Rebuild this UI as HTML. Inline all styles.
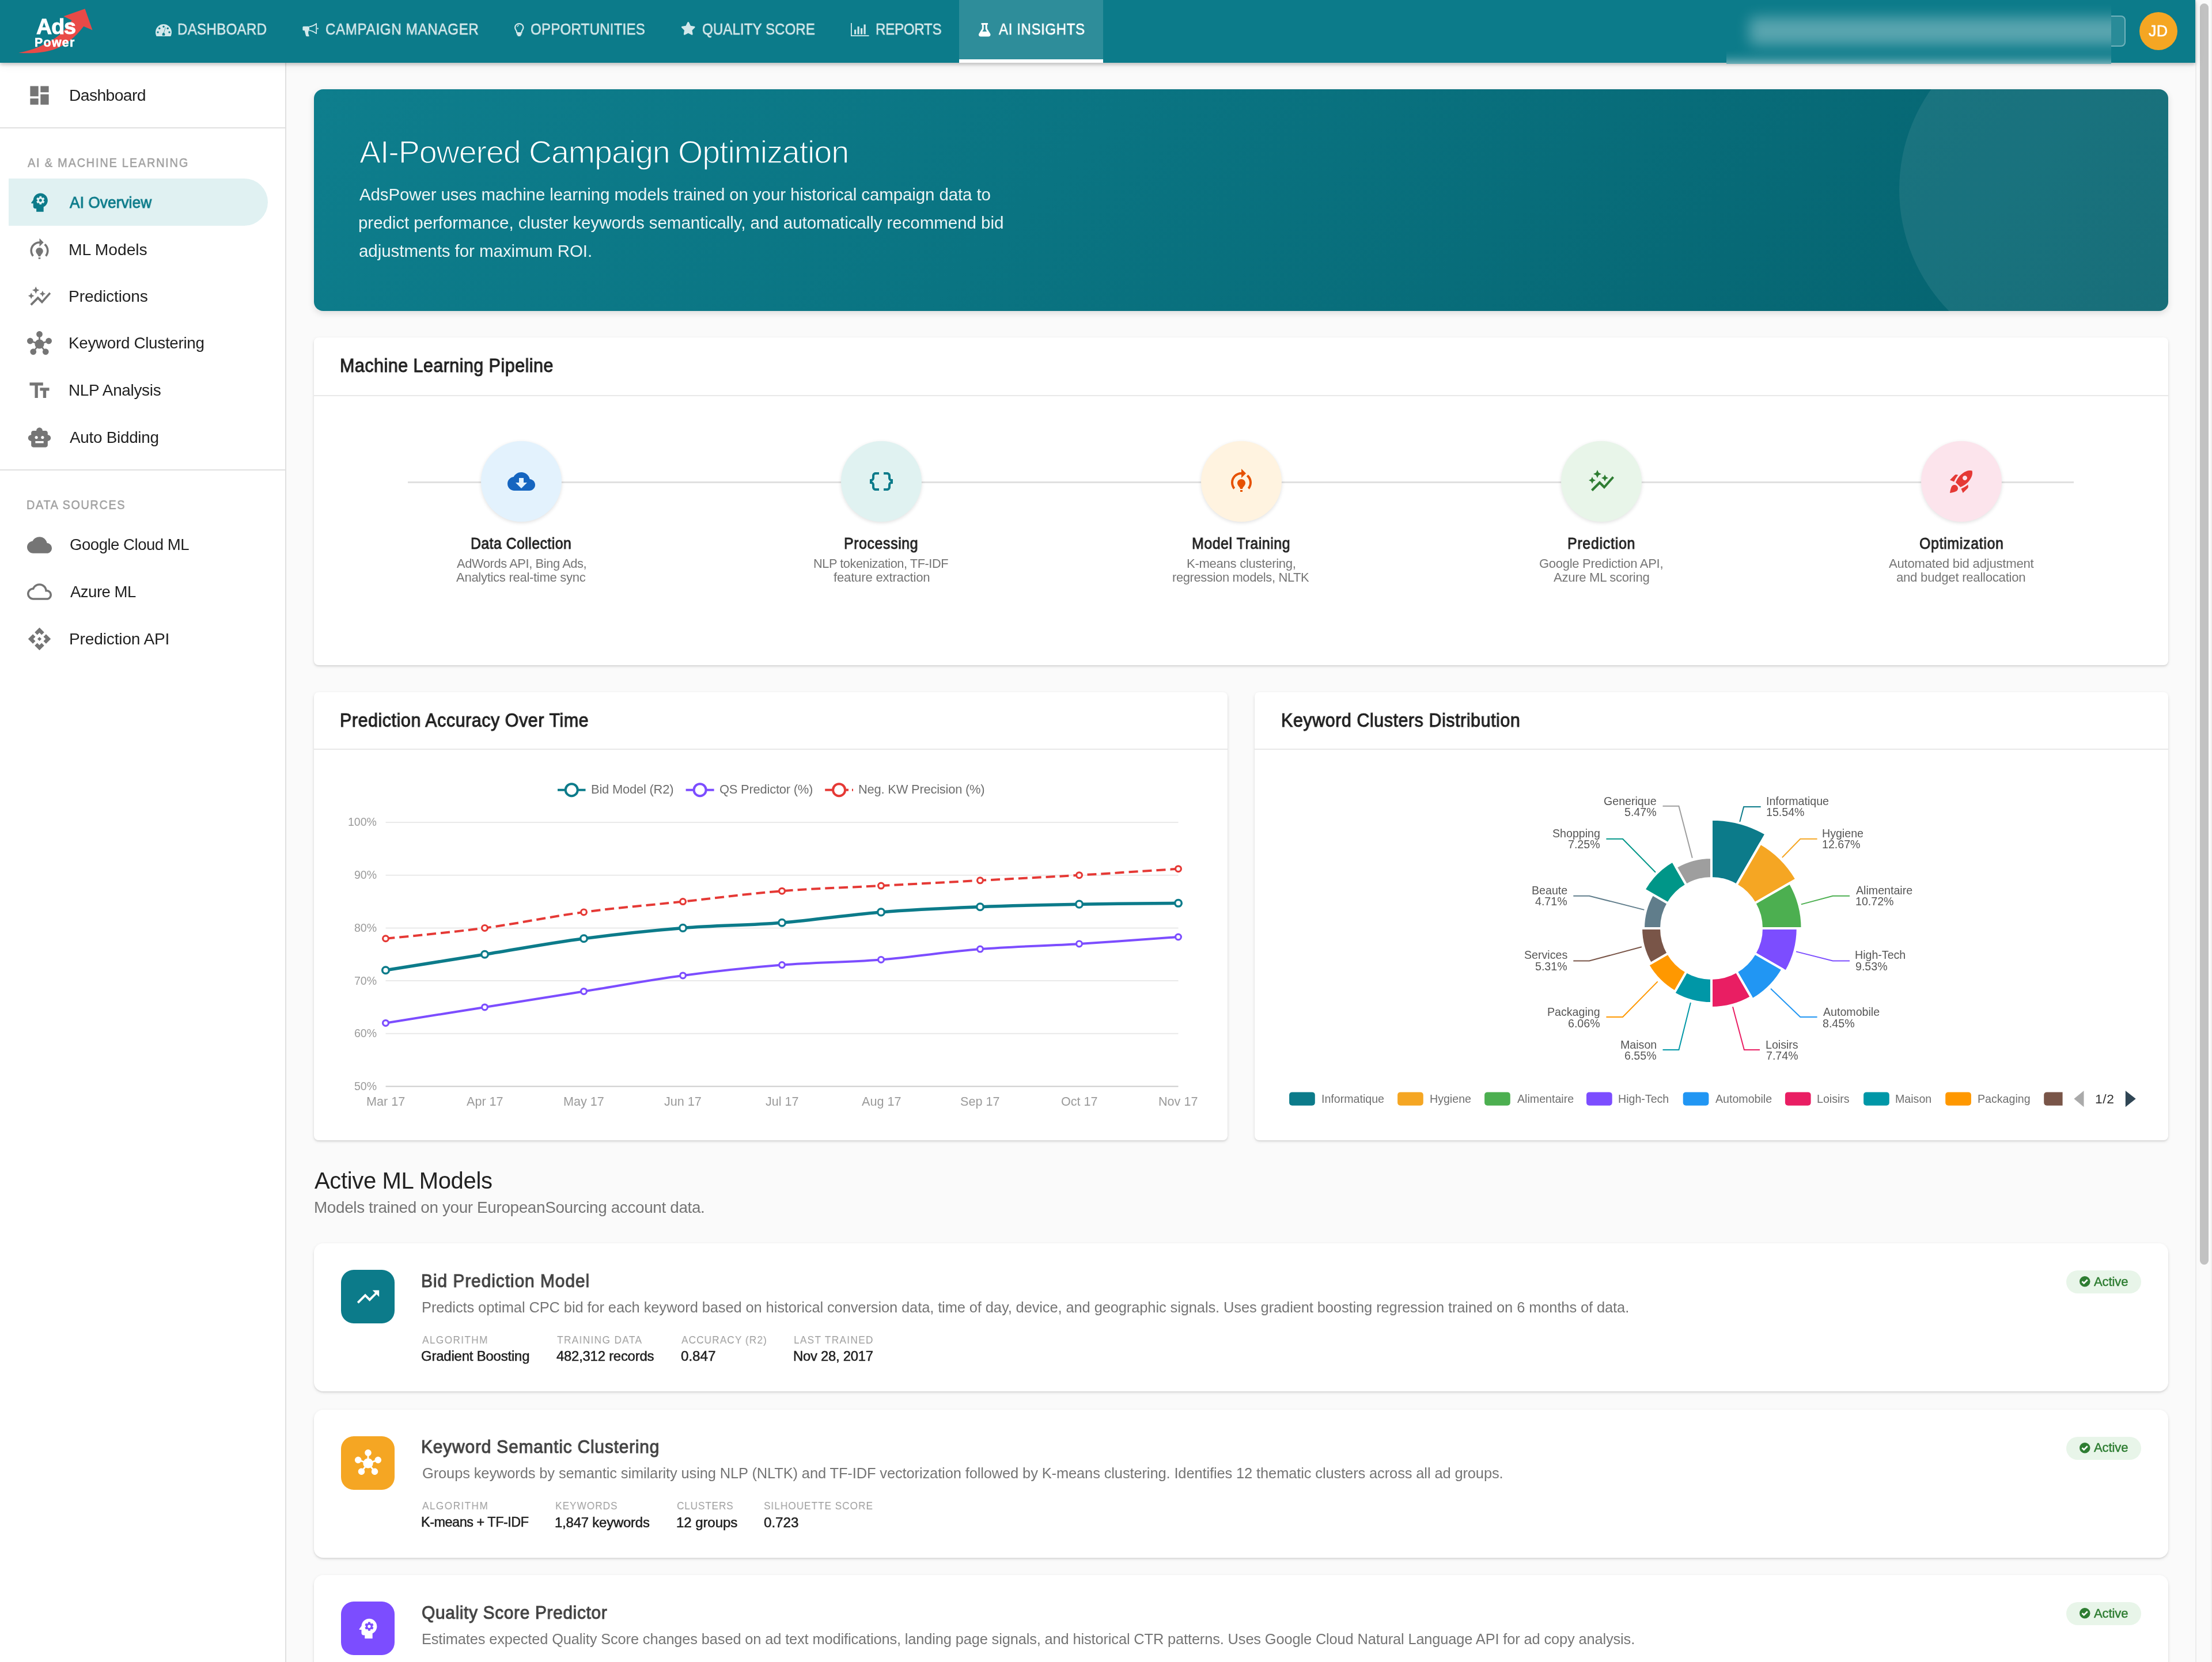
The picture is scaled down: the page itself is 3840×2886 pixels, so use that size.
<!DOCTYPE html><html><head><meta charset="utf-8"><title>AdsPower AI Insights</title><style>
html,body{margin:0;padding:0;width:3840px;height:2886px;overflow:hidden;background:#fafafa;}
body{position:relative;font-family:"Liberation Sans",sans-serif;}
.a{position:absolute;}
.t{position:absolute;white-space:nowrap;line-height:1;will-change:transform;}
svg.a{overflow:visible;}
</style></head><body>
<div class="a" style="left:497px;top:108px;width:3314px;height:2778px;background:#fafafa;"></div>
<div class="a" style="left:0px;top:108px;width:495px;height:2778px;background:#fff;"></div>
<div class="a" style="left:495px;top:108px;width:2px;height:2778px;background:#e0e0e0;"></div>
<div class="a" style="left:0px;top:0px;width:3811px;height:109px;background:#0c7b8a;box-shadow:0 3px 6px rgba(0,0,0,.2),0 2px 16px rgba(0,0,0,.1);z-index:5;"></div>
<div class="a" style="left:0;top:0;width:3811px;height:109px;z-index:6;">
<svg class="a" style="left:0;top:0;width:200px;height:108px" viewBox="0 0 200 108">
<path fill="#e94a47" d="M147.5 15.3 L110.5 28.2 L124.6 35.3 C118 46 108 58 96 66 C80 77 58 87 32.3 91.7 C55 93.5 75 91.5 92 86.5 C112 80 130 66 145.2 45.8 L160.5 52.3 Z"/>
</svg>
<div class="t" style="left:62.50px;top:28.10px;font-size:37.68px;color:#fff;letter-spacing:-1.050px;font-weight:700;-webkit-text-stroke:1px #fff;">Ads</div>
<div class="t" style="left:60.33px;top:63.70px;font-size:21.26px;color:#fff;letter-spacing:1.369px;font-weight:700;-webkit-text-stroke:0.6px #fff;">Power</div>
<div class="t" style="left:308.29px;top:37.96px;font-size:26.74px;color:#d3e7ea;letter-spacing:0.361px;-webkit-text-stroke:0.59px #d3e7ea;transform:scaleX(0.9);transform-origin:0 0;">DASHBOARD</div>
<div class="t" style="left:564.76px;top:37.96px;font-size:26.74px;color:#d3e7ea;letter-spacing:0.809px;-webkit-text-stroke:0.59px #d3e7ea;transform:scaleX(0.9);transform-origin:0 0;">CAMPAIGN MANAGER</div>
<div class="t" style="left:920.67px;top:37.96px;font-size:26.74px;color:#d3e7ea;letter-spacing:0.255px;-webkit-text-stroke:0.59px #d3e7ea;transform:scaleX(0.9);transform-origin:0 0;">OPPORTUNITIES</div>
<div class="t" style="left:1219.08px;top:37.96px;font-size:26.74px;color:#d3e7ea;letter-spacing:0.100px;-webkit-text-stroke:0.59px #d3e7ea;transform:scaleX(0.9);transform-origin:0 0;">QUALITY SCORE</div>
<div class="t" style="left:1519.69px;top:37.96px;font-size:26.74px;color:#d3e7ea;letter-spacing:-0.250px;-webkit-text-stroke:0.59px #d3e7ea;transform:scaleX(0.9);transform-origin:0 0;">REPORTS</div>
<div class="a" style="left:1665px;top:0px;width:250px;height:109px;background:rgba(255,255,255,0.14);"></div>
<div class="a" style="left:1665px;top:103px;width:250px;height:6px;background:#fff;"></div>
<div class="t" style="left:1734.39px;top:37.96px;font-size:26.74px;color:#fff;letter-spacing:0.658px;-webkit-text-stroke:0.59px #fff;transform:scaleX(0.9);transform-origin:0 0;">AI INSIGHTS</div>
<svg class="a" style="left:269.5px;top:42px;width:28px;height:21px" viewBox="0 0 28 21"><path fill="#d3e8eb" d="M14 0C6.3 0 0 6.3 0 14c0 2.5.6 4.8 1.7 6.9.1.1.2.1.3.1h24c.1 0 .2 0 .3-.1C27.4 18.8 28 16.5 28 14 28 6.3 21.7 0 14 0z"/>
<g fill="#0c7b8a"><circle cx="14" cy="4.2" r="1.7"/><circle cx="6.8" cy="7.2" r="1.7"/><circle cx="4" cy="14" r="1.7"/><circle cx="24" cy="14" r="1.7"/><circle cx="21.2" cy="7.2" r="1.7"/>
<path d="M17.6 5.8l-2.9 9.2c1 .5 1.7 1.6 1.7 2.8 0 .7-.2 1.3-.5 1.9h-3.8c-.3-.6-.5-1.2-.5-1.9 0-1.5 1.1-2.8 2.5-3.1l2.9-9.2z"/></g></svg>
<svg class="a" style="left:515px;top:30px;width:50px;height:40px" viewBox="0 0 50 40"><g fill="#d3e8eb"><rect x="10.4" y="15.8" width="11.6" height="7.2" rx="1.6"/><path d="M13.6 22.5 L16 32 Q16.5 33.2 18.2 33.2 L20.8 33.2 Q22.4 33 21.4 31.6 Q19.9 29.3 20.1 25.8 L21.4 22.5Z"/><circle cx="36.6" cy="19.6" r="1.3"/></g><path d="M21.8 16.4 C26.4 15.9 30.6 14 34.2 11 L34.2 28.2 C30.6 25.6 26.4 23.2 21.8 22.6" fill="none" stroke="#d3e8eb" stroke-width="1.7" stroke-linejoin="round"/></svg>
<svg class="a" style="left:892.5px;top:40px;width:16.5px;height:23px" viewBox="0 0 16.5 23"><path fill="none" stroke="#d3e8eb" stroke-width="2.2" d="M8.25 1.1C4.3 1.1 1.1 4.1 1.1 7.9c0 3 2.2 4.6 2.8 6.8.2.8.3 1.5.3 2.3h8.1c0-.8.1-1.5.3-2.3.6-2.2 2.8-3.8 2.8-6.8 0-3.8-3.2-6.8-7.15-6.8z"/><rect x="4.2" y="17.6" width="8.1" height="3.6" rx="1" fill="#d3e8eb"/><rect x="5.5" y="20.5" width="5.5" height="2.5" rx="1.2" fill="#d3e8eb"/><path d="M5 6.5c.3-1.3 1.3-2.2 2.6-2.5" stroke="#d3e8eb" stroke-width="1.3" fill="none"/></svg>
<svg class="a" style="left:1182px;top:38.4px;width:25.5px;height:24.5px" viewBox="0 0 576 550"><path fill="#d3e8eb" d="M259.3 17.8L194 150.2 47.9 171.5c-26.2 3.8-36.7 36.1-17.7 54.6l105.7 103-25 145.5c-4.5 26.3 23.2 46 46.4 33.7L288 439.6l130.7 68.7c23.2 12.2 50.9-7.4 46.4-33.7l-25-145.5 105.7-103c19-18.5 8.5-50.8-17.7-54.6L382 150.2 316.7 17.8c-11.7-23.6-45.6-23.9-57.4 0z"/></svg>
<svg class="a" style="left:1477px;top:40px;width:31.5px;height:23px" viewBox="0 0 31.5 23"><g fill="#d3e8eb"><rect x="0" y="0" width="1.8" height="23"/><rect x="0" y="21.2" width="31.5" height="1.8"/><rect x="6" y="11.5" width="3.2" height="8"/><rect x="11.5" y="6" width="3.2" height="13.5"/><rect x="17" y="9" width="3.2" height="10.5"/><rect x="22.5" y="2.5" width="3.2" height="17"/></g></svg>
<svg class="a" style="left:1698px;top:39.5px;width:22.5px;height:23.5px" viewBox="0 0 448 512"><path fill="#fff" d="M437.2 403.5L320 215V64h8c13.3 0 24-10.7 24-24V24c0-13.3-10.7-24-24-24H120c-13.3 0-24 10.7-24 24v16c0 13.3 10.7 24 24 24h8v151L10.8 403.5C-18.5 450.6 15.3 512 70.9 512h306.2c55.7 0 89.4-61.5 60.1-108.5zM137.9 320l48.2-77.6c3.7-5.2 5.8-11.6 5.8-18.4V64h64v160c0 6.9 2.2 13.200 5.8 18.4l48.2 77.6h-172z"/></svg>
<div class="a" style="left:3027px;top:27.3px;width:663px;height:53.7px;border:2px solid rgba(255,255,255,0.35);border-radius:8px;background:rgba(255,255,255,0.12);box-sizing:border-box;"></div>
<div class="a" style="left:2997px;top:0;width:668px;height:111px;overflow:hidden;background:#0c7b8a;">
<div class="a" style="left:0;top:0;width:668px;height:111px;filter:blur(12px);">
<div class="a" style="left:40px;top:30px;width:720px;height:48px;border-radius:8px;background:rgba(255,255,255,0.32);"></div>
<div class="a" style="left:-40px;top:113px;width:760px;height:60px;background:#f4f4f4;"></div>
</div></div>
<div class="a" style="left:3713.5px;top:20.8px;width:66.5px;height:66.5px;border-radius:50%;background:#f5a623;"></div>
<div class="t" style="left:3730.43px;top:41.34px;font-size:26.77px;color:#fff;letter-spacing:0.400px;-webkit-text-stroke:0.59px #fff;">JD</div>
</div>
<div class="a" style="left:3811px;top:0px;width:29px;height:2886px;background:#fafafa;"></div>
<div class="a" style="left:3811px;top:0px;width:2px;height:2886px;background:#ececec;"></div>
<div class="a" style="left:3838px;top:0px;width:2px;height:2886px;background:#efefef;"></div>
<div class="a" style="left:3819px;top:6px;width:15px;height:2190px;background:#c2c2c2;border-radius:8px;"></div>
<div class="t" style="left:119.62px;top:151.09px;font-size:28.37px;color:#212121;letter-spacing:-0.653px;">Dashboard</div>
<svg class="a" style="left:46.50px;top:143.90px;width:43.00px;height:43.00px" viewBox="0 0 24 24"><path fill="#757575" d="M3 13h8V3H3v10zm0 8h8v-6H3v6zm10 0h8V11h-8v10zm0-18v6h8V3h-8z"/></svg>
<div class="a" style="left:0px;top:221px;width:495px;height:2px;background:#e0e0e0;"></div>
<div class="t" style="left:47.50px;top:271.50px;font-size:22.09px;color:#9e9e9e;letter-spacing:2.024px;-webkit-text-stroke:0.49px #9e9e9e;transform:scaleX(0.9);transform-origin:0 0;">AI &amp; MACHINE LEARNING</div>
<div class="a" style="left:15.4px;top:310px;width:449.6px;height:82px;background:#e0f1f2;border-radius:0 41px 41px 0;"></div>
<svg class="a" style="left:46.50px;top:329.50px;width:43.00px;height:43.00px" viewBox="0 0 24 24"><path fill="#0c7b8a" d="M13 8.57c-.79 0-1.43.64-1.43 1.43s.64 1.43 1.43 1.43 1.43-.64 1.43-1.43-.64-1.43-1.43-1.43zM13 3C9.25 3 6.2 5.94 6.02 9.64L4.1 12.2c-.25.33-.01.8.4.8H6v3c0 1.1.9 2 2 2h1v3h7v-4.68c2.36-1.12 4-3.53 4-6.32 0-3.87-3.13-7-7-7zm3 7c0 .13-.01.26-.02.39l.83.66c.08.06.1.16.05.25l-.8 1.39c-.05.09-.16.12-.24.09l-.99-.4c-.21.16-.43.29-.67.39L14 13.83c-.01.1-.1.17-.2.17h-1.6c-.1 0-.18-.07-.2-.17l-.15-1.06c-.25-.1-.47-.23-.68-.39l-.99.4c-.09.03-.2 0-.25-.09l-.8-1.39c-.05-.08-.03-.19.05-.25l.84-.66c-.01-.13-.02-.26-.02-.39s.02-.27.04-.39l-.85-.66c-.08-.06-.1-.16-.05-.26l.8-1.38c.05-.09.15-.12.24-.09l1 .4c.2-.15.43-.29.67-.39L12 6.17c.02-.1.1-.17.2-.17h1.6c.1 0 .18.07.19.17l.15 1.06c.24.1.46.23.67.39l1-.4c.09-.03.2 0 .24.09l.8 1.38c.05.09.03.2-.05.26l-.85.66c.03.12.04.25.04.39z"/></svg>
<div class="t" style="left:121.48px;top:336.73px;font-size:28.20px;color:#0c7b8a;letter-spacing:0.087px;-webkit-text-stroke:0.90px #0c7b8a;transform:scaleX(0.93);transform-origin:0 0;">AI Overview</div>
<div class="t" style="left:119.35px;top:419.05px;font-size:28.30px;color:#212121;letter-spacing:-0.084px;">ML Models</div>
<svg class="a" style="left:46.50px;top:412.00px;width:43.00px;height:43.00px" viewBox="0 0 24 24"><path fill="#757575" d="M15.5 13.5c0 2-2.5 3.5-2.5 5h-2c0-1.5-2.5-3-2.5-5 0-1.93 1.57-3.5 3.5-3.5s3.5 1.57 3.5 3.5zm-2.5 6h-2V21h2v-1.5zm6-6.5c0 1.68-.59 3.21-1.58 4.42l1.42 1.42C20.18 17.27 21 15.23 21 13c0-2.74-1.23-5.19-3.16-6.84l-1.42 1.42C17.99 8.86 19 10.82 19 13zm-3-8l-4-4v3c-4.97 0-9 4.03-9 9 0 2.23.82 4.27 2.16 5.84l1.42-1.42C5.59 16.21 5 14.68 5 13c0-3.86 3.14-7 7-7v3l4-4z"/></svg>
<div class="t" style="left:119.35px;top:500.66px;font-size:28.16px;color:#212121;letter-spacing:-0.138px;">Predictions</div>
<svg class="a" style="left:46.50px;top:493.50px;width:43.00px;height:43.00px" viewBox="0 0 24 24"><path fill="#757575" d="M14.06 9.94L12 9l2.06-.94L15 6l.94 2.06L18 9l-2.06.94L15 12l-.94-2.06zM4 14l.94-2.06L7 11l-2.06-.94L4 8l-.94 2.06L1 11l2.06.94L4 14zm4.5-5l1.09-2.41L12 5.5 9.59 4.41 8.5 2 7.41 4.41 5 5.5l2.41 1.09L8.5 9zm-4 11.5l6-6.01 4 4L23 8.93l-1.41-1.41-7.09 7.97-4-4L3 19l1.5 1.5z"/></svg>
<div class="t" style="left:119.35px;top:582.46px;font-size:27.81px;color:#212121;letter-spacing:-0.300px;">Keyword Clustering</div>
<svg class="a" style="left:46.50px;top:575.00px;width:43.00px;height:43.00px" viewBox="0 0 24 24"><path fill="#757575" d="M8.4 18.2C8.78 18.7 9 19.32 9 20c0 1.66-1.34 3-3 3s-3-1.34-3-3 1.34-3 3-3c.44 0 .85.09 1.23.26l1.41-1.77c-.92-1.03-1.29-2.39-1.09-3.69l-2.03-.68C4.98 11.95 4.06 12.5 3 12.5c-1.66 0-3-1.34-3-3s1.34-3 3-3 3 1.34 3 3c0 .07 0 .14-.01.21l2.03.68c.64-1.21 1.82-2.09 3.22-2.32V5.91C9.96 5.57 9 4.4 9 3c0-1.66 1.34-3 3-3s3 1.34 3 3c0 1.4-.96 2.57-2.25 2.91v2.16c1.4.23 2.58 1.11 3.22 2.32l2.03-.68C18 9.64 18 9.57 18 9.5c0-1.66 1.34-3 3-3s3 1.34 3 3-1.34 3-3 3c-1.06 0-1.98-.55-2.52-1.37l-2.03.68c.2 1.29-.16 2.65-1.09 3.69l1.41 1.77c.38-.17.79-.26 1.23-.26 1.66 0 3 1.34 3 3s-1.34 3-3 3-3-1.34-3-3c0-.68.22-1.3.6-1.8l-1.41-1.77c-1.35.75-3.01.76-4.37 0L8.4 18.2z"/></svg>
<div class="t" style="left:119.35px;top:664.34px;font-size:27.94px;color:#212121;letter-spacing:-0.314px;">NLP Analysis</div>
<svg class="a" style="left:46.50px;top:657.00px;width:43.00px;height:43.00px" viewBox="0 0 24 24"><path fill="#757575" d="M2.5 4v3h5v12h3V7h5V4h-13zm19 5h-9v3h3v7h3v-7h3V9z"/></svg>
<div class="t" style="left:121.47px;top:746.08px;font-size:27.90px;color:#212121;letter-spacing:-0.286px;">Auto Bidding</div>
<svg class="a" style="left:46.50px;top:738.70px;width:43.00px;height:43.00px" viewBox="0 0 24 24"><path fill="#757575" d="M20 9V7c0-1.1-.9-2-2-2h-3c0-1.66-1.34-3-3-3S9 3.34 9 5H6c-1.1 0-2 .9-2 2v2c-1.66 0-3 1.34-3 3s1.34 3 3 3v4c0 1.1.9 2 2 2h12c1.1 0 2-.9 2-2v-4c1.66 0 3-1.34 3-3s-1.34-3-3-3zM7.5 11.5c0-.83.67-1.5 1.5-1.5s1.5.67 1.5 1.5S9.83 13 9 13s-1.5-.67-1.5-1.5zM16 17H8v-2h8v2zm-1-4c-.83 0-1.5-.67-1.5-1.5S14.17 10 15 10s1.5.67 1.5 1.5S15.83 13 15 13z"/></svg>
<div class="a" style="left:0px;top:815px;width:495px;height:2px;background:#e0e0e0;"></div>
<div class="t" style="left:45.92px;top:866.10px;font-size:22.09px;color:#9e9e9e;letter-spacing:1.806px;-webkit-text-stroke:0.49px #9e9e9e;transform:scaleX(0.9);transform-origin:0 0;">DATA SOURCES</div>
<div class="t" style="left:120.62px;top:932.15px;font-size:27.59px;color:#212121;letter-spacing:-0.496px;">Google Cloud ML</div>
<svg class="a" style="left:46.50px;top:924.50px;width:43.00px;height:43.00px" viewBox="0 0 24 24"><path fill="#757575" d="M19.35 10.04C18.67 6.59 15.64 4 12 4 9.11 4 6.6 5.64 5.35 8.04 2.34 8.36 0 10.91 0 14c0 3.31 2.69 6 6 6h13c2.76 0 5-2.24 5-5 0-2.64-2.05-4.78-4.65-4.96z"/></svg>
<div class="t" style="left:121.88px;top:1013.98px;font-size:27.54px;color:#212121;letter-spacing:-0.518px;">Azure ML</div>
<svg class="a" style="left:46.50px;top:1006.30px;width:43.00px;height:43.00px" viewBox="0 0 24 24"><path fill="#757575" d="M19.35 10.04C18.67 6.59 15.64 4 12 4 9.11 4 6.6 5.64 5.35 8.04 2.34 8.36 0 10.91 0 14c0 3.31 2.69 6 6 6h13c2.76 0 5-2.24 5-5 0-2.64-2.05-4.78-4.65-4.96zM19 18H6c-2.21 0-4-1.79-4-4s1.79-4 4-4h.71C7.37 7.69 9.48 6 12 6c3.04 0 5.5 2.46 5.5 5.5v.5H19c1.66 0 3 1.34 3 3s-1.34 3-3 3z"/></svg>
<div class="t" style="left:119.75px;top:1095.59px;font-size:28.13px;color:#212121;letter-spacing:-0.175px;">Prediction API</div>
<svg class="a" style="left:46.50px;top:1088.40px;width:43.00px;height:43.00px" viewBox="0 0 24 24"><path fill="#757575" d="M14 12l-2 2-2-2 2-2 2 2zm-2-6l2.12 2.12 2.5-2.5L12 1 7.38 5.62l2.5 2.5L12 6zm-6 6l2.12-2.12-2.5-2.5L1 12l4.62 4.62 2.5-2.5L6 12zm12 0l-2.12 2.12 2.5 2.5L23 12l-4.62-4.62-2.5 2.5L18 12zm-6 6l-2.12-2.12-2.5 2.5L12 23l4.62-4.62-2.5-2.5L12 18z"/></svg>
<div class="a" style="left:545px;top:155px;width:3219px;height:385px;border-radius:16px;overflow:hidden;background:linear-gradient(135deg,#0e7e8d 0%,#0a7482 40%,#05626e 100%);box-shadow:0 4px 12px rgba(0,0,0,0.12);">
<div class="a" style="left:2752px;top:-127px;width:602px;height:602px;border-radius:50%;background:rgba(255,255,255,0.08);"></div></div>
<div class="t" style="left:623.88px;top:237.13px;font-size:55.61px;color:#fff;letter-spacing:-1.094px;-webkit-text-stroke:1.4px #0c7988;">AI-Powered Campaign Optimization</div>
<div class="t" style="left:623.88px;top:323.05px;font-size:29.48px;color:rgba(255,255,255,0.92);letter-spacing:-0.102px;">AdsPower uses machine learning models trained on your historical campaign data to</div>
<div class="t" style="left:622.12px;top:372.17px;font-size:29.57px;color:rgba(255,255,255,0.92);letter-spacing:-0.076px;">predict performance, cluster keywords semantically, and automatically recommend bid</div>
<div class="t" style="left:622.75px;top:421.00px;font-size:29.53px;color:rgba(255,255,255,0.92);letter-spacing:-0.060px;">adjustments for maximum ROI.</div>
<div class="a" style="left:545px;top:586px;width:3219px;height:569px;background:#fff;border-radius:8px;box-shadow:0 2px 6px rgba(0,0,0,0.09),0 2px 3px rgba(0,0,0,0.09);"></div>
<div class="t" style="left:589.96px;top:619.49px;font-size:32.85px;color:#212121;letter-spacing:0.469px;-webkit-text-stroke:1.00px #212121;transform:scaleX(0.93);transform-origin:0 0;">Machine Learning Pipeline</div>
<div class="a" style="left:545px;top:686px;width:3219px;height:2px;background:#e8e8e8;"></div>
<div class="a" style="left:708px;top:836px;width:2892px;height:3px;background:#e0e0e0;"></div>
<div class="a" style="left:834.5px;top:766px;width:140px;height:140px;border-radius:50%;background:#e3f2fd;box-shadow:0 2px 6px rgba(0,0,0,0.12);"></div>
<svg class="a" style="left:880.50px;top:812.00px;width:48.00px;height:48.00px" viewBox="0 0 24 24"><path fill="#1565c0" d="M19.35 10.04C18.67 6.59 15.64 4 12 4 9.11 4 6.6 5.64 5.35 8.04 2.34 8.36 0 10.91 0 14c0 3.31 2.69 6 6 6h13c2.76 0 5-2.24 5-5 0-2.64-2.05-4.78-4.65-4.96zM17 13l-5 5-5-5h3V9h4v4h3z"/></svg>
<div class="t" style="left:816.92px;top:930.76px;font-size:26.74px;color:#212121;letter-spacing:0.470px;-webkit-text-stroke:0.90px #212121;transform:scaleX(0.93);transform-origin:0 0;">Data Collection</div>
<div class="t" style="left:792.60px;top:968.27px;font-size:21.88px;color:#757575;letter-spacing:-0.408px;">AdWords API, Bing Ads,</div>
<div class="t" style="left:792.10px;top:991.91px;font-size:22.08px;color:#757575;letter-spacing:-0.308px;">Analytics real-time sync</div>
<div class="a" style="left:1459.5px;top:766px;width:140px;height:140px;border-radius:50%;background:#e0f2f1;box-shadow:0 2px 6px rgba(0,0,0,0.12);"></div>
<svg class="a" style="left:1505.55px;top:812.00px;width:48.00px;height:48.00px" viewBox="0 0 24 24"><path fill="#0c7b8a" d="M4 7v2c0 .55-.45 1-1 1H2v4h1c.55 0 1 .45 1 1v2c0 1.65 1.35 3 3 3h3v-2H7c-.55 0-1-.45-1-1v-2c0-1.3-.84-2.42-2-2.83v-.34C5.16 11.42 6 10.3 6 9V7c0-.55.45-1 1-1h3V4H7C5.35 4 4 5.35 4 7zM21 10c-.55 0-1-.45-1-1V7c0-1.65-1.35-3-3-3h-3v2h3c.55 0 1 .45 1 1v2c0 1.3.84 2.42 2 2.83v.34c-1.16.41-2 1.52-2 2.83v2c0 .55-.45 1-1 1h-3v2h3c1.65 0 3-1.35 3-3v-2c0-.55.45-1 1-1h1v-4h-1z"/></svg>
<div class="t" style="left:1465.07px;top:930.76px;font-size:26.74px;color:#212121;letter-spacing:0.657px;-webkit-text-stroke:0.90px #212121;transform:scaleX(0.93);transform-origin:0 0;">Processing</div>
<div class="t" style="left:1411.90px;top:968.38px;font-size:21.76px;color:#757575;letter-spacing:-0.438px;">NLP tokenization, TF-IDF</div>
<div class="t" style="left:1446.50px;top:991.83px;font-size:22.18px;color:#757575;letter-spacing:-0.215px;">feature extraction</div>
<div class="a" style="left:2084.6px;top:766px;width:140px;height:140px;border-radius:50%;background:#fff3e0;box-shadow:0 2px 6px rgba(0,0,0,0.12);"></div>
<svg class="a" style="left:2130.60px;top:812.00px;width:48.00px;height:48.00px" viewBox="0 0 24 24"><path fill="#e65100" d="M15.5 13.5c0 2-2.5 3.5-2.5 5h-2c0-1.5-2.5-3-2.5-5 0-1.93 1.57-3.5 3.5-3.5s3.5 1.57 3.5 3.5zm-2.5 6h-2V21h2v-1.5zm6-6.5c0 1.68-.59 3.21-1.58 4.42l1.42 1.42C20.18 17.27 21 15.23 21 13c0-2.74-1.23-5.19-3.16-6.84l-1.42 1.42C17.99 8.86 19 10.82 19 13zm-3-8l-4-4v3c-4.97 0-9 4.03-9 9 0 2.23.82 4.27 2.16 5.84l1.42-1.42C5.59 16.21 5 14.68 5 13c0-3.86 3.14-7 7-7v3l4-4z"/></svg>
<div class="t" style="left:2069.07px;top:930.76px;font-size:26.74px;color:#212121;letter-spacing:0.619px;-webkit-text-stroke:0.90px #212121;transform:scaleX(0.93);transform-origin:0 0;">Model Training</div>
<div class="t" style="left:2059.70px;top:968.09px;font-size:22.11px;color:#757575;letter-spacing:-0.303px;">K-means clustering,</div>
<div class="t" style="left:2035.40px;top:992.04px;font-size:21.93px;color:#757575;letter-spacing:-0.362px;">regression models, NLTK</div>
<div class="a" style="left:2709.6px;top:766px;width:140px;height:140px;border-radius:50%;background:#e8f5e9;box-shadow:0 2px 6px rgba(0,0,0,0.12);"></div>
<svg class="a" style="left:2755.65px;top:812.00px;width:48.00px;height:48.00px" viewBox="0 0 24 24"><path fill="#2e7d32" d="M14.06 9.94L12 9l2.06-.94L15 6l.94 2.06L18 9l-2.06.94L15 12l-.94-2.06zM4 14l.94-2.06L7 11l-2.06-.94L4 8l-.94 2.06L1 11l2.06.94L4 14zm4.5-5l1.09-2.41L12 5.5 9.59 4.41 8.5 2 7.41 4.41 5 5.5l2.41 1.09L8.5 9zm-4 11.5l6-6.01 4 4L23 8.93l-1.41-1.41-7.09 7.97-4-4L3 19l1.5 1.5z"/></svg>
<div class="t" style="left:2720.72px;top:930.76px;font-size:26.74px;color:#212121;letter-spacing:0.816px;-webkit-text-stroke:0.90px #212121;transform:scaleX(0.93);transform-origin:0 0;">Prediction</div>
<div class="t" style="left:2672.47px;top:968.14px;font-size:22.04px;color:#757575;letter-spacing:-0.293px;">Google Prediction API,</div>
<div class="t" style="left:2696.95px;top:991.87px;font-size:22.12px;color:#757575;letter-spacing:-0.298px;">Azure ML scoring</div>
<div class="a" style="left:3334.7px;top:766px;width:140px;height:140px;border-radius:50%;background:#fce4ec;box-shadow:0 2px 6px rgba(0,0,0,0.12);"></div>
<svg class="a" style="left:3380.70px;top:812.00px;width:48.00px;height:48.00px" viewBox="0 0 24 24"><path fill="#e53935" d="M9.19 6.35c-2.04 2.29-3.44 5.58-3.57 5.89L2 10.69l4.05-4.05c.47-.47 1.15-.68 1.81-.55l1.33.26zM11.17 17s3.74-1.55 5.89-3.7c5.4-5.4 4.5-9.62 4.21-10.57-.95-.3-5.17-1.19-10.57 4.21C8.55 9.09 7 12.83 7 12.83L11.17 17zm6.48-2.19c-2.29 2.04-5.58 3.44-5.89 3.57L13.31 22l4.05-4.05c.47-.47.68-1.15.55-1.81l-.26-1.33zM9 18c0 .83-.34 1.58-.88 2.12C6.94 21.3 2 22 2 22s.7-4.94 1.88-6.12C4.42 15.34 5.17 15 6 15c1.66 0 3 1.34 3 3zm4-9c0-1.1.9-2 2-2s2 .9 2 2-.9 2-2 2-2-.9-2-2z"/></svg>
<div class="t" style="left:3331.94px;top:930.76px;font-size:26.74px;color:#212121;letter-spacing:0.759px;-webkit-text-stroke:0.90px #212121;transform:scaleX(0.93);transform-origin:0 0;">Optimization</div>
<div class="t" style="left:3279.10px;top:968.03px;font-size:22.17px;color:#757575;letter-spacing:-0.247px;">Automated bid adjustment</div>
<div class="t" style="left:3292.32px;top:991.81px;font-size:22.19px;color:#757575;letter-spacing:-0.278px;">and budget reallocation</div>
<div class="a" style="left:545px;top:1202px;width:1586px;height:778px;background:#fff;border-radius:8px;box-shadow:0 2px 6px rgba(0,0,0,0.09),0 2px 3px rgba(0,0,0,0.09);"></div>
<div class="t" style="left:589.86px;top:1234.59px;font-size:32.85px;color:#212121;letter-spacing:0.545px;-webkit-text-stroke:1.00px #212121;transform:scaleX(0.93);transform-origin:0 0;">Prediction Accuracy Over Time</div>
<div class="a" style="left:545px;top:1300px;width:1586px;height:2px;background:#e8e8e8;"></div>
<svg class="a" style="left:0;top:0;width:3840px;height:2886px;pointer-events:none" viewBox="0 0 3840 2886">
<line x1="669.5" y1="1794.8" x2="2045.5" y2="1794.8" stroke="#e9e9e9" stroke-width="2"/>
<line x1="669.5" y1="1703.1" x2="2045.5" y2="1703.1" stroke="#e9e9e9" stroke-width="2"/>
<line x1="669.5" y1="1611.4" x2="2045.5" y2="1611.4" stroke="#e9e9e9" stroke-width="2"/>
<line x1="669.5" y1="1519.7" x2="2045.5" y2="1519.7" stroke="#e9e9e9" stroke-width="2"/>
<line x1="669.5" y1="1428.0" x2="2045.5" y2="1428.0" stroke="#e9e9e9" stroke-width="2"/>
<line x1="669.5" y1="1886.5" x2="2045.5" y2="1886.5" stroke="#cccccc" stroke-width="2"/>
<path d="M669.50 1629.74 C669.50 1629.74 781.51 1619.40 841.50 1611.40 C901.91 1603.35 953.09 1591.94 1013.50 1583.89 C1073.49 1575.89 1125.30 1571.97 1185.50 1565.55 C1245.70 1559.13 1297.17 1552.03 1357.50 1547.21 C1417.57 1542.41 1469.30 1541.25 1529.50 1538.04 C1589.70 1534.83 1641.30 1532.08 1701.50 1528.87 C1761.70 1525.66 1813.32 1523.23 1873.50 1519.70 C1933.72 1516.17 2045.50 1508.70 2045.50 1508.70" fill="none" stroke="#e53935" stroke-width="4" stroke-dasharray="16 8" stroke-linejoin="round"/>
<circle cx="669.50" cy="1629.74" r="4.9" fill="#fff" stroke="#e53935" stroke-width="3.2"/>
<circle cx="841.50" cy="1611.40" r="4.9" fill="#fff" stroke="#e53935" stroke-width="3.2"/>
<circle cx="1013.50" cy="1583.89" r="4.9" fill="#fff" stroke="#e53935" stroke-width="3.2"/>
<circle cx="1185.50" cy="1565.55" r="4.9" fill="#fff" stroke="#e53935" stroke-width="3.2"/>
<circle cx="1357.50" cy="1547.21" r="4.9" fill="#fff" stroke="#e53935" stroke-width="3.2"/>
<circle cx="1529.50" cy="1538.04" r="4.9" fill="#fff" stroke="#e53935" stroke-width="3.2"/>
<circle cx="1701.50" cy="1528.87" r="4.9" fill="#fff" stroke="#e53935" stroke-width="3.2"/>
<circle cx="1873.50" cy="1519.70" r="4.9" fill="#fff" stroke="#e53935" stroke-width="3.2"/>
<circle cx="2045.50" cy="1508.70" r="4.9" fill="#fff" stroke="#e53935" stroke-width="3.2"/>
<path d="M669.50 1776.46 C669.50 1776.46 781.30 1758.58 841.50 1748.95 C901.70 1739.32 953.30 1731.07 1013.50 1721.44 C1073.70 1711.81 1125.09 1701.98 1185.50 1693.93 C1245.49 1685.93 1297.17 1680.41 1357.50 1675.59 C1417.57 1670.79 1469.43 1671.22 1529.50 1666.42 C1589.83 1661.60 1641.17 1652.90 1701.50 1648.08 C1761.57 1643.28 1813.33 1642.60 1873.50 1638.91 C1933.73 1635.22 2045.50 1626.99 2045.50 1626.99" fill="none" stroke="#7c4dff" stroke-width="4" stroke-linejoin="round"/>
<circle cx="669.50" cy="1776.46" r="4.9" fill="#fff" stroke="#7c4dff" stroke-width="3.2"/>
<circle cx="841.50" cy="1748.95" r="4.9" fill="#fff" stroke="#7c4dff" stroke-width="3.2"/>
<circle cx="1013.50" cy="1721.44" r="4.9" fill="#fff" stroke="#7c4dff" stroke-width="3.2"/>
<circle cx="1185.50" cy="1693.93" r="4.9" fill="#fff" stroke="#7c4dff" stroke-width="3.2"/>
<circle cx="1357.50" cy="1675.59" r="4.9" fill="#fff" stroke="#7c4dff" stroke-width="3.2"/>
<circle cx="1529.50" cy="1666.42" r="4.9" fill="#fff" stroke="#7c4dff" stroke-width="3.2"/>
<circle cx="1701.50" cy="1648.08" r="4.9" fill="#fff" stroke="#7c4dff" stroke-width="3.2"/>
<circle cx="1873.50" cy="1638.91" r="4.9" fill="#fff" stroke="#7c4dff" stroke-width="3.2"/>
<circle cx="2045.50" cy="1626.99" r="4.9" fill="#fff" stroke="#7c4dff" stroke-width="3.2"/>
<path d="M669.50 1684.76 C669.50 1684.76 781.30 1666.88 841.50 1657.25 C901.70 1647.62 953.09 1637.79 1013.50 1629.74 C1073.49 1621.74 1125.17 1616.22 1185.50 1611.40 C1245.57 1606.60 1297.43 1607.03 1357.50 1602.23 C1417.83 1597.41 1469.17 1588.71 1529.50 1583.89 C1589.57 1579.09 1641.27 1577.13 1701.50 1574.72 C1761.67 1572.31 1813.29 1571.26 1873.50 1570.13 C1933.69 1569.01 2045.50 1568.30 2045.50 1568.30" fill="none" stroke="#0c7b8a" stroke-width="5.5" stroke-linejoin="round"/>
<circle cx="669.50" cy="1684.76" r="5.8" fill="#fff" stroke="#0c7b8a" stroke-width="3.5"/>
<circle cx="841.50" cy="1657.25" r="5.8" fill="#fff" stroke="#0c7b8a" stroke-width="3.5"/>
<circle cx="1013.50" cy="1629.74" r="5.8" fill="#fff" stroke="#0c7b8a" stroke-width="3.5"/>
<circle cx="1185.50" cy="1611.40" r="5.8" fill="#fff" stroke="#0c7b8a" stroke-width="3.5"/>
<circle cx="1357.50" cy="1602.23" r="5.8" fill="#fff" stroke="#0c7b8a" stroke-width="3.5"/>
<circle cx="1529.50" cy="1583.89" r="5.8" fill="#fff" stroke="#0c7b8a" stroke-width="3.5"/>
<circle cx="1701.50" cy="1574.72" r="5.8" fill="#fff" stroke="#0c7b8a" stroke-width="3.5"/>
<circle cx="1873.50" cy="1570.13" r="5.8" fill="#fff" stroke="#0c7b8a" stroke-width="3.5"/>
<circle cx="2045.50" cy="1568.30" r="5.8" fill="#fff" stroke="#0c7b8a" stroke-width="3.5"/>
<line x1="968" y1="1371.7" x2="1016.5" y2="1371.7" stroke="#0c7b8a" stroke-width="4"/>
<circle cx="992.25" cy="1371.7" r="10.5" fill="#fff" stroke="#0c7b8a" stroke-width="4"/>
<line x1="1190.6" y1="1371.7" x2="1239.6" y2="1371.7" stroke="#7c4dff" stroke-width="4"/>
<circle cx="1215.1" cy="1371.7" r="10.5" fill="#fff" stroke="#7c4dff" stroke-width="4"/>
<line x1="1432.2" y1="1371.7" x2="1446.2" y2="1371.7" stroke="#e53935" stroke-width="4"/>
<line x1="1469" y1="1371.7" x2="1473" y2="1371.7" stroke="#e53935" stroke-width="4"/>
<line x1="1479" y1="1371.7" x2="1481" y2="1371.7" stroke="#e53935" stroke-width="4"/>
<circle cx="1456.6" cy="1371.7" r="10.5" fill="#fff" stroke="#e53935" stroke-width="4"/>
</svg>
<div class="t" style="left:1026.05px;top:1360.33px;font-size:21.93px;color:#6e6e6e;letter-spacing:-0.206px;">Bid Model (R2)</div>
<div class="t" style="left:1249.00px;top:1360.35px;font-size:21.91px;color:#6e6e6e;letter-spacing:-0.213px;">QS Predictor (%)</div>
<div class="t" style="left:1490.15px;top:1360.35px;font-size:21.92px;color:#6e6e6e;letter-spacing:-0.216px;">Neg. KW Precision (%)</div>
<div class="t" style="left:614.92px;top:1876.99px;font-size:19.50px;color:#9a9a9a;">50%</div>
<div class="t" style="left:614.92px;top:1785.29px;font-size:19.50px;color:#9a9a9a;">60%</div>
<div class="t" style="left:614.92px;top:1693.59px;font-size:19.50px;color:#9a9a9a;">70%</div>
<div class="t" style="left:614.92px;top:1601.89px;font-size:19.50px;color:#9a9a9a;">80%</div>
<div class="t" style="left:614.92px;top:1510.19px;font-size:19.50px;color:#9a9a9a;">90%</div>
<div class="t" style="left:604.17px;top:1418.49px;font-size:19.50px;color:#9a9a9a;">100%</div>
<div class="t" style="left:635.50px;top:1901.62px;font-size:21.60px;color:#9a9a9a;">Mar 17</div>
<div class="t" style="left:810.12px;top:1901.62px;font-size:21.60px;color:#9a9a9a;">Apr 17</div>
<div class="t" style="left:977.69px;top:1901.62px;font-size:21.60px;color:#9a9a9a;">May 17</div>
<div class="t" style="left:1153.38px;top:1901.62px;font-size:21.60px;color:#9a9a9a;">Jun 17</div>
<div class="t" style="left:1329.00px;top:1901.62px;font-size:21.60px;color:#9a9a9a;">Jul 17</div>
<div class="t" style="left:1495.75px;top:1901.62px;font-size:21.60px;color:#9a9a9a;">Aug 17</div>
<div class="t" style="left:1667.25px;top:1901.62px;font-size:21.60px;color:#9a9a9a;">Sep 17</div>
<div class="t" style="left:1841.69px;top:1901.62px;font-size:21.60px;color:#9a9a9a;">Oct 17</div>
<div class="t" style="left:2010.88px;top:1901.62px;font-size:21.60px;color:#9a9a9a;">Nov 17</div>
<div class="a" style="left:2178px;top:1202px;width:1586px;height:778px;background:#fff;border-radius:8px;box-shadow:0 2px 6px rgba(0,0,0,0.09),0 2px 3px rgba(0,0,0,0.09);"></div>
<div class="t" style="left:2224.06px;top:1234.59px;font-size:32.85px;color:#212121;letter-spacing:0.552px;-webkit-text-stroke:1.00px #212121;transform:scaleX(0.93);transform-origin:0 0;">Keyword Clusters Distribution</div>
<div class="a" style="left:2178px;top:1300px;width:1586px;height:2px;background:#e8e8e8;"></div>
<svg class="a" style="left:0;top:0;width:3840px;height:2886px;pointer-events:none" viewBox="0 0 3840 2886">
<path d="M2971.00 1525.00 L2971.00 1422.70 A189.30 189.30 0 0 1 3065.65 1448.06 L3014.50 1536.66 A87 87 0 0 0 2971.00 1525.00Z" fill="#0c7b8a" stroke="#fff" stroke-width="4" stroke-linejoin="round"/>
<path d="M3014.50 1536.66 L3056.20 1464.42 A170.41 170.41 0 0 1 3118.58 1526.80 L3046.34 1568.50 A87 87 0 0 0 3014.50 1536.66Z" fill="#f5a623" stroke="#fff" stroke-width="4" stroke-linejoin="round"/>
<path d="M3046.34 1568.50 L3107.46 1533.22 A157.57 157.57 0 0 1 3128.57 1612.00 L3058.00 1612.00 A87 87 0 0 0 3046.34 1568.50Z" fill="#4caf50" stroke="#fff" stroke-width="4" stroke-linejoin="round"/>
<path d="M3058.00 1612.00 L3120.74 1612.00 A149.74 149.74 0 0 1 3100.68 1686.87 L3046.34 1655.50 A87 87 0 0 0 3058.00 1612.00Z" fill="#7c4dff" stroke="#fff" stroke-width="4" stroke-linejoin="round"/>
<path d="M3046.34 1655.50 L3094.52 1683.31 A142.63 142.63 0 0 1 3042.31 1735.52 L3014.50 1687.34 A87 87 0 0 0 3046.34 1655.50Z" fill="#2196f3" stroke="#fff" stroke-width="4" stroke-linejoin="round"/>
<path d="M3014.50 1687.34 L3039.98 1731.47 A137.95 137.95 0 0 1 2971.00 1749.95 L2971.00 1699.00 A87 87 0 0 0 3014.50 1687.34Z" fill="#e91e63" stroke="#fff" stroke-width="4" stroke-linejoin="round"/>
<path d="M2971.00 1699.00 L2971.00 1742.12 A130.12 130.12 0 0 1 2905.94 1724.69 L2927.50 1687.34 A87 87 0 0 0 2971.00 1699.00Z" fill="#0097a7" stroke="#fff" stroke-width="4" stroke-linejoin="round"/>
<path d="M2927.50 1687.34 L2907.55 1721.89 A126.89 126.89 0 0 1 2861.11 1675.45 L2895.66 1655.50 A87 87 0 0 0 2927.50 1687.34Z" fill="#ff9800" stroke="#fff" stroke-width="4" stroke-linejoin="round"/>
<path d="M2895.66 1655.50 L2865.38 1672.98 A121.96 121.96 0 0 1 2849.04 1612.00 L2884.00 1612.00 A87 87 0 0 0 2895.66 1655.50Z" fill="#795548" stroke="#fff" stroke-width="4" stroke-linejoin="round"/>
<path d="M2884.00 1612.00 L2852.99 1612.00 A118.01 118.01 0 0 1 2868.80 1553.00 L2895.66 1568.50 A87 87 0 0 0 2884.00 1612.00Z" fill="#607d8b" stroke="#fff" stroke-width="4" stroke-linejoin="round"/>
<path d="M2895.66 1568.50 L2854.32 1544.64 A134.73 134.73 0 0 1 2903.64 1495.32 L2927.50 1536.66 A87 87 0 0 0 2895.66 1568.50Z" fill="#009688" stroke="#fff" stroke-width="4" stroke-linejoin="round"/>
<path d="M2927.50 1536.66 L2909.50 1505.47 A123.01 123.01 0 0 1 2971.00 1488.99 L2971.00 1525.00 A87 87 0 0 0 2927.50 1536.66Z" fill="#9e9e9e" stroke="#fff" stroke-width="4" stroke-linejoin="round"/>
<polyline points="3020.3,1427 3027.1,1400.9 3056.7,1400.9" fill="none" stroke="#0c7b8a" stroke-width="2"/>
<polyline points="3093.8,1489 3125.3,1456.8 3154.6,1456.8" fill="none" stroke="#f5a623" stroke-width="2"/>
<polyline points="3126.8,1570.4 3181.7,1555.7 3211,1555.7" fill="none" stroke="#4caf50" stroke-width="2"/>
<polyline points="3118,1652.4 3181.7,1668.5 3211,1668.5" fill="none" stroke="#7c4dff" stroke-width="2"/>
<polyline points="3074,1716.8 3125.3,1765.9 3154.6,1765.9" fill="none" stroke="#2196f3" stroke-width="2"/>
<polyline points="3008,1748.3 3027.9,1823 3055,1823" fill="none" stroke="#e91e63" stroke-width="2"/>
<polyline points="2934.9,1741 2914.4,1823 2886.5,1823" fill="none" stroke="#0097a7" stroke-width="2"/>
<polyline points="2877.7,1704.4 2817,1765.9 2788.4,1765.9" fill="none" stroke="#ff9800" stroke-width="2"/>
<polyline points="2849.9,1644.3 2759,1668.5 2731.3,1668.5" fill="none" stroke="#795548" stroke-width="2"/>
<polyline points="2854.3,1579.9 2759,1555.7 2731.3,1555.7" fill="none" stroke="#607d8b" stroke-width="2"/>
<polyline points="2874,1514.7 2817,1456.8 2788.4,1456.8" fill="none" stroke="#009688" stroke-width="2"/>
<polyline points="2937.8,1489.8 2914.4,1399.7 2886.5,1399.7" fill="none" stroke="#9e9e9e" stroke-width="2"/>
<rect x="2238.1" y="1896.4" width="44.7" height="23.3" rx="5" fill="#0c7b8a"/>
<rect x="2426.1" y="1896.4" width="44.7" height="23.3" rx="5" fill="#f5a623"/>
<rect x="2577.1" y="1896.4" width="44.7" height="23.3" rx="5" fill="#4caf50"/>
<rect x="2754" y="1896.4" width="44.7" height="23.3" rx="5" fill="#7c4dff"/>
<rect x="2921.7" y="1896.4" width="44.7" height="23.3" rx="5" fill="#2196f3"/>
<rect x="3098.9" y="1896.4" width="44.7" height="23.3" rx="5" fill="#e91e63"/>
<rect x="3235.1" y="1896.4" width="44.7" height="23.3" rx="5" fill="#0097a7"/>
<rect x="3377.2" y="1896.4" width="44.7" height="23.3" rx="5" fill="#ff9800"/>
<clipPath id="clipb"><rect x="3540" y="1890" width="40.6" height="40"/></clipPath><rect x="3548.2" y="1896.4" width="44.7" height="23.3" rx="5" fill="#795548" clip-path="url(#clipb)"/>
<path d="M3617.5 1894 L3600.4 1908.1 L3617.5 1922.2Z" fill="#aaaaaa"/>
<path d="M3689.8 1894 L3707.7 1908.1 L3689.8 1922.2Z" fill="#2f4554"/>
</svg>
<div class="t" style="left:3065.65px;top:1381.69px;font-size:19.62px;color:#555555;">Informatique</div>
<div class="t" style="left:3065.90px;top:1401.39px;font-size:19.62px;color:#555555;">15.54%</div>
<div class="t" style="left:3163.18px;top:1437.79px;font-size:19.62px;color:#555555;">Hygiene</div>
<div class="t" style="left:3163.30px;top:1457.49px;font-size:19.62px;color:#555555;">12.67%</div>
<div class="t" style="left:3222.00px;top:1536.59px;font-size:19.62px;color:#555555;">Alimentaire</div>
<div class="t" style="left:3220.50px;top:1556.29px;font-size:19.62px;color:#555555;">10.72%</div>
<div class="t" style="left:3220.38px;top:1649.39px;font-size:19.62px;color:#555555;">High-Tech</div>
<div class="t" style="left:3221.12px;top:1669.09px;font-size:19.62px;color:#555555;">9.53%</div>
<div class="t" style="left:3164.80px;top:1748.29px;font-size:19.62px;color:#555555;">Automobile</div>
<div class="t" style="left:3163.93px;top:1767.99px;font-size:19.62px;color:#555555;">8.45%</div>
<div class="t" style="left:3065.07px;top:1804.59px;font-size:19.62px;color:#555555;">Loisirs</div>
<div class="t" style="left:3065.70px;top:1824.29px;font-size:19.62px;color:#555555;">7.74%</div>
<div class="t" style="left:2812.80px;top:1804.59px;font-size:19.62px;color:#555555;">Maison</div>
<div class="t" style="left:2819.80px;top:1824.29px;font-size:19.62px;color:#555555;">6.55%</div>
<div class="t" style="left:2686.32px;top:1748.29px;font-size:19.62px;color:#555555;">Packaging</div>
<div class="t" style="left:2721.70px;top:1767.99px;font-size:19.62px;color:#555555;">6.06%</div>
<div class="t" style="left:2645.68px;top:1649.39px;font-size:19.62px;color:#555555;">Services</div>
<div class="t" style="left:2665.30px;top:1669.09px;font-size:19.62px;color:#555555;">5.31%</div>
<div class="t" style="left:2659.05px;top:1536.59px;font-size:19.62px;color:#555555;">Beaute</div>
<div class="t" style="left:2665.30px;top:1556.29px;font-size:19.62px;color:#555555;">4.71%</div>
<div class="t" style="left:2695.07px;top:1437.79px;font-size:19.62px;color:#555555;">Shopping</div>
<div class="t" style="left:2721.70px;top:1457.49px;font-size:19.62px;color:#555555;">7.25%</div>
<div class="t" style="left:2784.05px;top:1381.69px;font-size:19.62px;color:#555555;">Generique</div>
<div class="t" style="left:2819.80px;top:1401.39px;font-size:19.62px;color:#555555;">5.47%</div>
<div class="t" style="left:2293.95px;top:1898.59px;font-size:19.62px;color:#6e6e6e;">Informatique</div>
<div class="t" style="left:2481.68px;top:1898.59px;font-size:19.62px;color:#6e6e6e;">Hygiene</div>
<div class="t" style="left:2634.30px;top:1898.59px;font-size:19.62px;color:#6e6e6e;">Alimentaire</div>
<div class="t" style="left:2808.78px;top:1898.59px;font-size:19.62px;color:#6e6e6e;">High-Tech</div>
<div class="t" style="left:2978.00px;top:1898.59px;font-size:19.62px;color:#6e6e6e;">Automobile</div>
<div class="t" style="left:3153.68px;top:1898.59px;font-size:19.62px;color:#6e6e6e;">Loisirs</div>
<div class="t" style="left:3289.97px;top:1898.59px;font-size:19.62px;color:#6e6e6e;">Maison</div>
<div class="t" style="left:3433.38px;top:1898.59px;font-size:19.62px;color:#6e6e6e;">Packaging</div>
<div class="t" style="left:3637.30px;top:1896.59px;font-size:22.81px;color:#333;letter-spacing:0.675px;">1/2</div>
<div class="t" style="left:546.17px;top:2030.15px;font-size:39.99px;color:#212121;letter-spacing:-0.342px;">Active ML Models</div>
<div class="t" style="left:544.75px;top:2082.90px;font-size:27.88px;color:#757575;letter-spacing:-0.356px;">Models trained on your EuropeanSourcing account data.</div>
<div class="a" style="left:545px;top:2159px;width:3219px;height:257px;background:#fff;border-radius:16px;box-shadow:0 2px 6px rgba(0,0,0,0.09),0 2px 3px rgba(0,0,0,0.09);"></div>
<div class="a" style="left:592px;top:2205.3px;width:93px;height:93px;background:#0c7b8a;border-radius:22px;"></div>
<svg class="a" style="left:615.50px;top:2228.80px;width:46.00px;height:46.00px" viewBox="0 0 24 24"><path fill="#fff" d="M16 6l2.29 2.29-4.88 4.88-4-4L2 16.59 3.41 18l6-6 4 4 6.3-6.29L22 12V6z"/></svg>
<div class="t" style="left:730.76px;top:2207.69px;font-size:32.27px;color:#424242;letter-spacing:0.960px;-webkit-text-stroke:1.00px #424242;transform:scaleX(0.93);transform-origin:0 0;">Bid Prediction Model</div>
<div class="t" style="left:731.67px;top:2257.73px;font-size:25.48px;color:#757575;letter-spacing:-0.107px;">Predicts optimal CPC bid for each keyword based on historical conversion data, time of day, device, and geographic signals. Uses gradient boosting regression trained on 6 months of data.</div>
<div class="t" style="left:732.50px;top:2316.96px;font-size:19.19px;color:#9e9e9e;letter-spacing:1.498px;transform:scaleX(0.9);transform-origin:0 0;">ALGORITHM</div>
<div class="t" style="left:731.25px;top:2343.33px;font-size:23.94px;color:#212121;letter-spacing:-0.197px;-webkit-text-stroke:0.53px #212121;">Gradient Boosting</div>
<div class="t" style="left:966.56px;top:2316.96px;font-size:19.19px;color:#9e9e9e;letter-spacing:1.495px;transform:scaleX(0.9);transform-origin:0 0;">TRAINING DATA</div>
<div class="t" style="left:966.40px;top:2343.39px;font-size:23.87px;color:#212121;letter-spacing:-0.218px;-webkit-text-stroke:0.53px #212121;">482,312 records</div>
<div class="t" style="left:1183.30px;top:2316.96px;font-size:19.19px;color:#9e9e9e;letter-spacing:1.182px;transform:scaleX(0.9);transform-origin:0 0;">ACCURACY (R2)</div>
<div class="t" style="left:1182.42px;top:2343.13px;font-size:24.19px;color:#212121;letter-spacing:-0.044px;-webkit-text-stroke:0.53px #212121;">0.847</div>
<div class="t" style="left:1377.55px;top:2316.96px;font-size:19.19px;color:#9e9e9e;letter-spacing:1.444px;transform:scaleX(0.9);transform-origin:0 0;">LAST TRAINED</div>
<div class="t" style="left:1377.03px;top:2343.45px;font-size:23.80px;color:#212121;letter-spacing:-0.241px;-webkit-text-stroke:0.52px #212121;">Nov 28, 2017</div>
<div class="a" style="left:3587px;top:2206px;width:130px;height:40px;border-radius:20px;background:#e8f5e9;"></div>
<svg class="a" style="left:3610.2px;top:2216px;width:18.5px;height:18.5px" viewBox="0 0 20 20"><circle cx="10" cy="10" r="10" fill="#2e7d32"/><path d="M4.9 10.1l3.4 3.3 6.6-6.7" fill="none" stroke="#fff" stroke-width="3"/></svg>
<div class="t" style="left:3634.60px;top:2214.92px;font-size:22.07px;color:#2e7d32;letter-spacing:-0.135px;-webkit-text-stroke:0.49px #2e7d32;">Active</div>
<div class="a" style="left:545px;top:2447.5px;width:3219px;height:257px;background:#fff;border-radius:16px;box-shadow:0 2px 6px rgba(0,0,0,0.09),0 2px 3px rgba(0,0,0,0.09);"></div>
<div class="a" style="left:592px;top:2493.8px;width:93px;height:93px;background:#f5a623;border-radius:22px;"></div>
<svg class="a" style="left:615.50px;top:2517.30px;width:46.00px;height:46.00px" viewBox="0 0 24 24"><path fill="#fff" d="M8.4 18.2C8.78 18.7 9 19.32 9 20c0 1.66-1.34 3-3 3s-3-1.34-3-3 1.34-3 3-3c.44 0 .85.09 1.23.26l1.41-1.77c-.92-1.03-1.29-2.39-1.09-3.69l-2.03-.68C4.98 11.95 4.06 12.5 3 12.5c-1.66 0-3-1.34-3-3s1.34-3 3-3 3 1.34 3 3c0 .07 0 .14-.01.21l2.03.68c.64-1.21 1.82-2.09 3.22-2.32V5.91C9.96 5.57 9 4.4 9 3c0-1.66 1.34-3 3-3s3 1.34 3 3c0 1.4-.96 2.57-2.25 2.91v2.16c1.4.23 2.58 1.11 3.22 2.32l2.03-.68C18 9.64 18 9.57 18 9.5c0-1.66 1.34-3 3-3s3 1.34 3 3-1.34 3-3 3c-1.06 0-1.98-.55-2.52-1.37l-2.03.68c.2 1.29-.16 2.65-1.09 3.69l1.41 1.77c.38-.17.79-.26 1.23-.26 1.66 0 3 1.34 3 3s-1.34 3-3 3-3-1.34-3-3c0-.68.22-1.3.6-1.8l-1.41-1.77c-1.35.75-3.01.76-4.37 0L8.4 18.2z"/></svg>
<div class="t" style="left:730.76px;top:2496.19px;font-size:32.27px;color:#424242;letter-spacing:0.819px;-webkit-text-stroke:1.00px #424242;transform:scaleX(0.93);transform-origin:0 0;">Keyword Semantic Clustering</div>
<div class="t" style="left:732.55px;top:2546.24px;font-size:25.47px;color:#757575;letter-spacing:-0.122px;">Groups keywords by semantic similarity using NLP (NLTK) and TF-IDF vectorization followed by K-means clustering. Identifies 12 thematic clusters across all ad groups.</div>
<div class="t" style="left:732.50px;top:2605.46px;font-size:19.19px;color:#9e9e9e;letter-spacing:1.554px;transform:scaleX(0.9);transform-origin:0 0;">ALGORITHM</div>
<div class="t" style="left:730.62px;top:2632.29px;font-size:23.40px;color:#212121;letter-spacing:-0.453px;-webkit-text-stroke:0.51px #212121;">K-means + TF-IDF</div>
<div class="t" style="left:963.65px;top:2605.46px;font-size:19.19px;color:#9e9e9e;letter-spacing:1.091px;transform:scaleX(0.9);transform-origin:0 0;">KEYWORDS</div>
<div class="t" style="left:963.25px;top:2631.86px;font-size:23.91px;color:#212121;letter-spacing:-0.194px;-webkit-text-stroke:0.53px #212121;">1,847 keywords</div>
<div class="t" style="left:1174.80px;top:2605.46px;font-size:19.19px;color:#9e9e9e;letter-spacing:0.887px;transform:scaleX(0.9);transform-origin:0 0;">CLUSTERS</div>
<div class="t" style="left:1173.83px;top:2631.73px;font-size:24.06px;color:#212121;letter-spacing:-0.088px;-webkit-text-stroke:0.53px #212121;">12 groups</div>
<div class="t" style="left:1326.11px;top:2605.46px;font-size:19.19px;color:#9e9e9e;letter-spacing:1.061px;transform:scaleX(0.9);transform-origin:0 0;">SILHOUETTE SCORE</div>
<div class="t" style="left:1326.03px;top:2631.60px;font-size:24.22px;color:#212121;letter-spacing:-0.062px;-webkit-text-stroke:0.53px #212121;">0.723</div>
<div class="a" style="left:3587px;top:2494.5px;width:130px;height:40px;border-radius:20px;background:#e8f5e9;"></div>
<svg class="a" style="left:3610.2px;top:2504.5px;width:18.5px;height:18.5px" viewBox="0 0 20 20"><circle cx="10" cy="10" r="10" fill="#2e7d32"/><path d="M4.9 10.1l3.4 3.3 6.6-6.7" fill="none" stroke="#fff" stroke-width="3"/></svg>
<div class="t" style="left:3634.60px;top:2503.42px;font-size:22.07px;color:#2e7d32;letter-spacing:-0.135px;-webkit-text-stroke:0.49px #2e7d32;">Active</div>
<div class="a" style="left:545px;top:2735px;width:3219px;height:257px;background:#fff;border-radius:16px;box-shadow:0 2px 6px rgba(0,0,0,0.09),0 2px 3px rgba(0,0,0,0.09);"></div>
<div class="a" style="left:592px;top:2781.3px;width:93px;height:93px;background:#7c4dff;border-radius:22px;"></div>
<svg class="a" style="left:615.50px;top:2804.80px;width:46.00px;height:46.00px" viewBox="0 0 24 24"><path fill="#fff" d="M13 8.57c-.79 0-1.43.64-1.43 1.43s.64 1.43 1.43 1.43 1.43-.64 1.43-1.43-.64-1.43-1.43-1.43zM13 3C9.25 3 6.2 5.94 6.02 9.64L4.1 12.2c-.25.33-.01.8.4.8H6v3c0 1.1.9 2 2 2h1v3h7v-4.68c2.36-1.12 4-3.53 4-6.32 0-3.87-3.13-7-7-7zm3 7c0 .13-.01.26-.02.39l.83.66c.08.06.1.16.05.25l-.8 1.39c-.05.09-.16.12-.24.09l-.99-.4c-.21.16-.43.29-.67.39L14 13.83c-.01.1-.1.17-.2.17h-1.6c-.1 0-.18-.07-.2-.17l-.15-1.06c-.25-.1-.47-.23-.68-.39l-.99.4c-.09.03-.2 0-.25-.09l-.8-1.39c-.05-.08-.03-.19.05-.25l.84-.66c-.01-.13-.02-.26-.02-.39s.02-.27.04-.39l-.85-.66c-.08-.06-.1-.16-.05-.26l.8-1.38c.05-.09.15-.12.24-.09l1 .4c.2-.15.43-.29.67-.39L12 6.17c.02-.1.1-.17.2-.17h1.6c.1 0 .18.07.19.17l.15 1.06c.24.1.46.23.67.39l1-.4c.09-.03.2 0 .24.09l.8 1.38c.05.09.03.2-.05.26l-.85.66c.03.12.04.25.04.39z"/></svg>
<div class="t" style="left:731.81px;top:2783.69px;font-size:32.27px;color:#424242;letter-spacing:0.643px;-webkit-text-stroke:1.00px #424242;transform:scaleX(0.93);transform-origin:0 0;">Quality Score Predictor</div>
<div class="t" style="left:731.67px;top:2833.80px;font-size:25.40px;color:#757575;letter-spacing:-0.129px;">Estimates expected Quality Score changes based on ad text modifications, landing page signals, and historical CTR patterns. Uses Google Cloud Natural Language API for ad copy analysis.</div>
<div class="a" style="left:3587px;top:2782px;width:130px;height:40px;border-radius:20px;background:#e8f5e9;"></div>
<svg class="a" style="left:3610.2px;top:2792px;width:18.5px;height:18.5px" viewBox="0 0 20 20"><circle cx="10" cy="10" r="10" fill="#2e7d32"/><path d="M4.9 10.1l3.4 3.3 6.6-6.7" fill="none" stroke="#fff" stroke-width="3"/></svg>
<div class="t" style="left:3634.60px;top:2790.92px;font-size:22.07px;color:#2e7d32;letter-spacing:-0.135px;-webkit-text-stroke:0.49px #2e7d32;">Active</div>
<script>(function(){var w=window.innerWidth;if(w&&Math.abs(w-3840)>2){document.documentElement.style.zoom=(w/3840);}})();</script>
</body></html>
